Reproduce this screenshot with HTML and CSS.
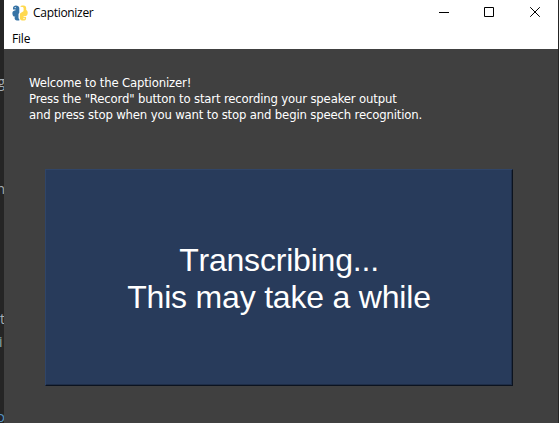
FILE: index.html
```html
<!DOCTYPE html>
<html lang="en">
<head>
<meta charset="utf-8">
<title>Captionizer</title>
<link rel="stylesheet" href="styles.css">
</head>
<body>
<div class="desktop">
  <span class="behind behind-g">g</span>
  <span class="behind behind-n">n</span>
  <span class="behind behind-t">t</span>
  <span class="behind behind-i">i</span>
  <span class="behind behind-o">o</span>
  <main class="window">
    <header class="titlebar">
      <svg class="logo" viewBox="0 0 16 16" width="16" height="16">
        <path fill="#3673a5" d="M1 3C1 1.300 2.300.4 4 .4S7.300 1.400 7.300 3v4.300c0 1-.6 1.700-1.500 2.200L4.600 10.200c-.8.5-.9 1-.9 1.800L1.300 11.200C.5 10 .2 8.500.5 7.300.8 6.200 2 5.800 3.600 5.300V4.600H1zM3 10.500l3.500-1.700v3.500c0 1 .2 1.500.8 1.900v1.400H5C3.500 15.500 2.600 14.500 2.600 13z"/>
        <path fill="#ffd94f" d="M8.300 1.800C8.600.8 10 .3 11.600.5c1.700.2 2.600 1.200 2.600 2.700v1.700c1.200.5 1.600 1.700 1.500 3.200-.1 1.800-.9 2.900-2.300 3.200h-1.800v.7h2.500v1.400c0 1.500-1.300 2.200-3 2.200s-3.200-.8-3.200-2.400V9.700c0-1.100.6-1.700 1.500-2.200l1.300-.7c.7-.4.900-.8.900-1.600V3.400c0-1-.5-1.500-1.400-1.500z"/>
        <circle cx="3.200" cy="2.600" r=".65" fill="#fff"/>
        <circle cx="12" cy="13.500" r=".65" fill="#fff"/>
      </svg>
      <span class="title">Captionizer</span>
      <div class="controls">
        <svg class="control minimize" viewBox="0 0 10 10"><path d="M0 5.500H10"/></svg>
        <svg class="control" viewBox="0 0 10 10"><path d="M.5.500H9.500V9.500H.5z"/></svg>
        <svg class="control" viewBox="0 0 10 10"><path d="M.2.200L9.800 9.800M9.800.2L.2 9.800"/></svg>
      </div>
    </header>
    <nav class="menubar"><span class="menu">File</span></nav>
    <section class="content">
      <div class="intro">
        <div class="line">Welcome to the Captionizer!</div>
        <div class="line">Press the "Record" button to start recording your speaker output</div>
        <div class="line">and press stop when you want to stop and begin speech recognition.</div>
      </div>
      <button class="record">Transcribing...<br>This may take a while</button>
    </section>
  </main>
</div>
</body>
</html>
```
FILE: styles.css
```css
* { box-sizing: border-box; }
body { margin: 0; overflow: hidden; }
.desktop {
  position: relative;
  width: 559px;
  height: 423px;
  padding: 0 1px 0 4px;
  background: #252525;
  overflow: hidden;
}
.behind {
  position: absolute;
  right: 554px;
  color: #a5adb2;
  font: 14px/16px "Open Sans", sans-serif;
}
.behind-g { top: 74px; }
.behind-n { top: 181px; }
.behind-t { top: 311px; }
.behind-i { top: 334px; right: auto; left: -1px; color: #8fa9a9; }
.behind-o { top: 409px; color: #5794c4; }
.window {
  position: relative;
  display: flex;
  flex-direction: column;
  height: 423px;
  background: #404040;
}
.titlebar {
  display: flex;
  align-items: center;
  height: 27px;
  padding: 0 18px 2px 8px;
  background: #fff;
}
.logo { flex: none; }
.title {
  margin-left: 5px;
  color: #000;
  font: 12px/16px "Open Sans", sans-serif;
  letter-spacing: -0.3px;
}
.controls {
  display: flex;
  gap: 36px;
  height: 11px;
  margin-left: auto;
}
.control {
  width: 10px;
  height: 10px;
  fill: none;
  stroke: #000;
  stroke-width: 1;
}
.minimize { margin-right: -1px; }
.menubar {
  height: 22px;
  padding: 4px 8px 0;
  background: #fff;
}
.menu {
  display: block;
  color: #000;
  font: 12px/16px "Open Sans", sans-serif;
  letter-spacing: -0.2px;
}
.content {
  display: flex;
  flex-direction: column;
  flex: 1;
  padding: 26px 0 0 25px;
}
.intro {
  color: #fff;
  font: 13px/16px "DejaVu Sans Condensed", "DejaVu Sans", sans-serif;
  letter-spacing: -0.17px;
  white-space: nowrap;
}
.line { height: 16px; }
.record {
  width: 468px;
  height: 217px;
  margin: 46px 0 0 16px;
  padding: 3px 0 0;
  border: 1px solid #304568;
  border-right-color: #0c131f;
  border-bottom-color: #0c131f;
  box-shadow: inset -1px -1px #1e2d47;
  background: #283b5b;
  color: #fff;
  font: 32px/37px "Liberation Sans", Arial, sans-serif;
  font-kerning: none;
  letter-spacing: -0.2px;
}
```
